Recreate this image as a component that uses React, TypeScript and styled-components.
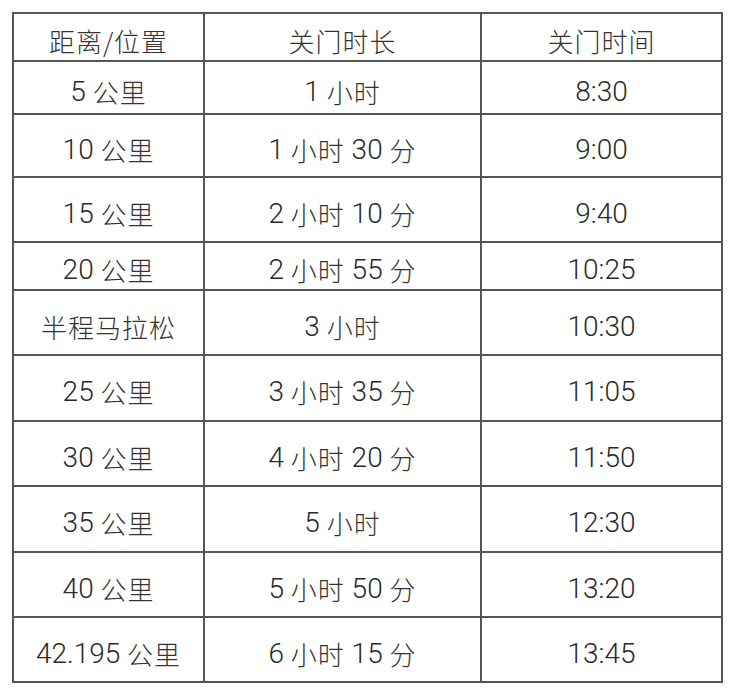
import styled, { createGlobalStyle } from 'styled-components';

const GlobalStyle = createGlobalStyle`
  html, body {
    margin: 0;
    padding: 0;
    background: #ffffff;
  }
`;

const Page = styled.div`
  padding: 13px 0 0 13px;
`;

const Table = styled.div`
  display: grid;
  grid-template-columns: 191px 277px 241px;
  grid-template-rows: 48px 53px 63px 65px 48px 65px 66px 65px 66px 65px 65px;
  width: max-content;
  border-top: 2px solid #555;
  border-left: 2px solid #555;
  margin: -1px 0 0 -1px;
`;

const Cell = styled.div`
  display: flex;
  align-items: center;
  justify-content: center;
  padding-top: 7px;
  box-sizing: border-box;
  border-right: 2px solid #555;
  border-bottom: 2px solid #555;
  font-family: "Noto Sans CJK SC", "Noto Sans", sans-serif;
  font-weight: 300;
  font-size: 26px;
  letter-spacing: 1px;
  color: #333;
  white-space: pre;
`;

const Num = styled.span`
  font-family: Roboto, "Liberation Sans", sans-serif;
  font-weight: 300;
  font-size: 28px;
  letter-spacing: 0;
  color: #2a2a2a;
`;

const header = ['距离/位置', '关门时长', '关门时间'];

const rows = [
  ['5 公里', '1 小时', '8:30'],
  ['10 公里', '1 小时 30 分', '9:00'],
  ['15 公里', '2 小时 10 分', '9:40'],
  ['20 公里', '2 小时 55 分', '10:25'],
  ['半程马拉松', '3 小时', '10:30'],
  ['25 公里', '3 小时 35 分', '11:05'],
  ['30 公里', '4 小时 20 分', '11:50'],
  ['35 公里', '5 小时', '12:30'],
  ['40 公里', '5 小时 50 分', '13:20'],
  ['42.195 公里', '6 小时 15 分', '13:45'],
];

// digits get the light latin face, the rest stays in the CJK face
function Text({ value }: { value: string }) {
  const parts = value.split(/([0-9.:]+)/).filter((p) => p !== '');
  return (
    <>
      {parts.map((p, i) =>
        /^[0-9.:]+$/.test(p) ? <Num key={i}>{p}</Num> : <span key={i}>{p}</span>
      )}
    </>
  );
}

export default function App() {
  return (
    <Page>
      <GlobalStyle />
      <Table>
        {header.map((h) => (
          <Cell key={h}>
            <Text value={h} />
          </Cell>
        ))}
        {rows.map((row) =>
          row.map((c, j) => (
            <Cell key={row[0] + j}>
              <Text value={c} />
            </Cell>
          ))
        )}
      </Table>
    </Page>
  );
}
